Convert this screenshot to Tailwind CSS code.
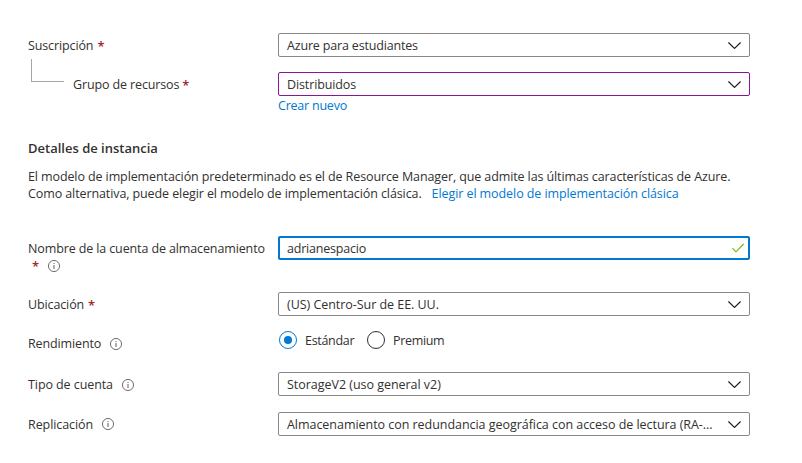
<!DOCTYPE html>
<html lang="es">
<head>
<meta charset="utf-8">
<title>Crear cuenta de almacenamiento</title>
<script src="https://cdn.jsdelivr.net/npm/@tailwindcss/browser@4"></script>
</head>
<body class="bg-white">
<svg class="hidden">
  <symbol id="chevron" viewBox="0 0 13 7"><path d="M.4.5 6.5 6.4 12.6.5" fill="none" stroke="#1b1a19" stroke-width="1.15"/></symbol>
  <symbol id="info" viewBox="0 0 12 12"><circle cx="6" cy="6" r="5.55" fill="none" stroke="#605e5c" stroke-width=".9"/><path d="M6 5v4M6 3v1" stroke="#605e5c" stroke-width="1"/></symbol>
</svg>
<main class="flex h-[463px] w-[802px] flex-col pt-[33px] pr-[52px] pl-7 font-['Open_Sans','Noto_Sans',sans-serif] text-[12.5px] leading-6 tracking-[-0.12px] whitespace-nowrap text-[#323130]">
  <div class="flex h-6">
    <label class="flex w-[250px] gap-1 leading-[26px]">Suscripción <span class="text-[13px] font-semibold text-[#a4262c]">*</span></label>
    <div class="flex flex-1 items-center justify-between rounded-xs border border-[#8a8886] pt-0.5 pr-2 pl-2"><span class="tracking-[-0.17px]">Azure para estudiantes</span><svg class="mb-px h-[7px] w-[13px]"><use href="#chevron"/></svg></div>
  </div>

  <div class="mt-0.5 flex h-[37px]">
    <div class="flex w-[250px]">
      <div class="ml-[3px] h-[23px] w-[33px] border-b border-l border-[#a6a6a6]"></div>
      <label class="mt-[13px] ml-[9px] flex h-6 gap-[3px] leading-[26px]"><span class="tracking-[-0.13px]">Grupo de recursos</span><span class="text-[13px] font-semibold text-[#a4262c]">*</span></label>
    </div>
    <div class="mt-[13px] flex h-6 flex-1 items-center justify-between rounded-xs border border-[#881798] pt-0.5 pr-2 pl-2"><span>Distribuidos</span><svg class="mb-px h-[7px] w-[13px]"><use href="#chevron"/></svg></div>
  </div>
  <a class="ml-[250px] h-[18px] leading-[20px] tracking-[-0.22px] text-[#0078d4]">Crear nuevo</a>

  <h2 class="mt-[22px] h-6 text-[13px] font-semibold tracking-normal">Detalles de instancia</h2>
  <p class="mt-2 h-[34px] leading-[17px] tracking-[-0.105px]">El modelo de implementación predeterminado es el de Resource Manager, que admite las últimas características de Azure.<br><span class="tracking-[-0.1px]">Como alternativa, puede elegir el modelo de implementación clásica.</span><a class="ml-[10px] tracking-[-0.08px] text-[#0078d4]">Elegir el modelo de implementación clásica</a></p>

  <div class="mt-[34px] flex h-9">
    <label class="w-[250px]">
      <span class="block h-[18px] leading-[26px]">Nombre de la cuenta de almacenamiento</span>
      <span class="flex items-center pl-1"><span class="text-[13px] font-semibold text-[#a4262c]">*</span><svg class="ml-[9px] size-3"><use href="#info"/></svg></span>
    </label>
    <div class="flex h-6 flex-1 items-center justify-between rounded-xs border-2 border-[#0078d4] pt-0.5 pr-1 pl-[7px]"><span class="tracking-[-0.2px]">adrianespacio</span><svg class="mb-0.5 h-3 w-3" viewBox="0 0 12 12" fill="none" stroke="#6bb700" stroke-width="1.1"><path d="M.4 6.2 4 9.8 11.6 2"/></svg></div>
  </div>

  <div class="mt-5 flex h-6">
    <label class="flex w-[250px] gap-1 leading-[26px]">Ubicación <span class="text-[13px] font-semibold text-[#a4262c]">*</span></label>
    <div class="flex flex-1 items-center justify-between rounded-xs border border-[#8a8886] pt-0.5 pr-2 pl-2"><span class="tracking-[-0.04px]">(US) Centro-Sur de EE. UU.</span><svg class="mb-px h-[7px] w-[13px]"><use href="#chevron"/></svg></div>
  </div>

  <div class="mt-3 flex h-7">
    <label class="flex w-[250px] items-center gap-[9px] pt-1">Rendimiento<svg class="size-3"><use href="#info"/></svg></label>
    <div class="flex h-6 items-center pl-px">
      <span class="flex size-[18px] items-center justify-center rounded-full border border-[#0078d4]"><span class="size-2 rounded-full bg-[#0078d4]"></span></span>
      <span class="ml-2 w-[54px] pt-0.5 tracking-[-0.3px]">Estándar</span>
      <span class="ml-2 size-[18px] rounded-full border border-[#323130]"></span>
      <span class="ml-2 pt-0.5 tracking-[-0.33px]">Premium</span>
    </div>
  </div>

  <div class="mt-4 flex h-6">
    <label class="flex w-[250px] items-center gap-[9px] pt-0.5 tracking-[-0.08px]">Tipo de cuenta<svg class="size-3"><use href="#info"/></svg></label>
    <div class="flex flex-1 items-center justify-between rounded-xs border border-[#8a8886] pt-0.5 pr-2 pl-2"><span class="tracking-[-0.03px]">StorageV2 (uso general v2)</span><svg class="mb-px h-[7px] w-[13px]"><use href="#chevron"/></svg></div>
  </div>

  <div class="mt-4 flex h-6">
    <label class="flex w-[250px] items-center gap-[9px] pt-0.5 tracking-[-0.08px]">Replicación<svg class="mb-0.5 size-3"><use href="#info"/></svg></label>
    <div class="flex flex-1 items-center justify-between rounded-xs border border-[#8a8886] pt-0.5 pr-2 pl-2"><span class="tracking-[-0.04px]">Almacenamiento con redundancia geográfica con acceso de lectura (RA-...</span><svg class="mb-px h-[7px] w-[13px]"><use href="#chevron"/></svg></div>
  </div>
</main>
</body>
</html>
